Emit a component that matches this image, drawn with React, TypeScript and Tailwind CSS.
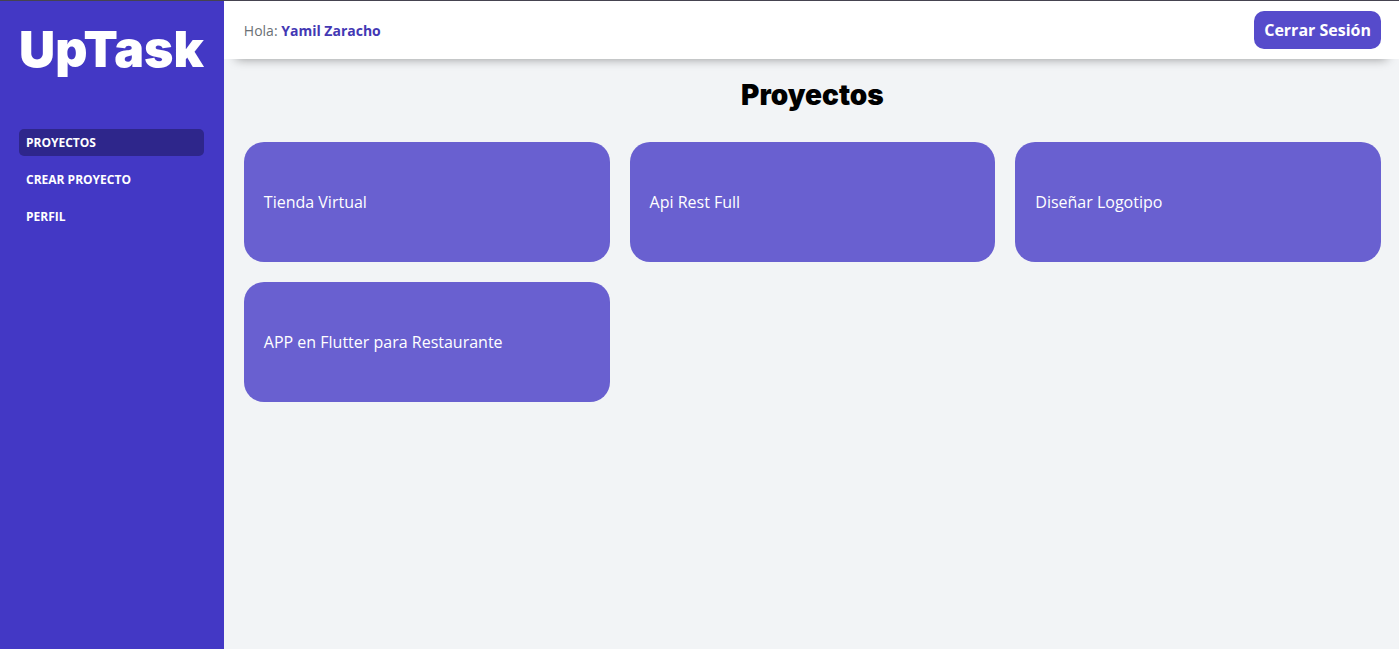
const links = [
  { label: "PROYECTOS", active: true },
  { label: "CREAR PROYECTO", active: false },
  { label: "PERFIL", active: false },
];

const projects = [
  "Tienda Virtual",
  "Api Rest Full",
  "Diseñar Logotipo",
  "APP en Flutter para Restaurante",
];

function Sidebar() {
  return (
    <aside className="w-[16%] shrink-0 bg-[#4338c5] pl-[19px] pr-5 pt-3 text-white">
      <h2 className="text-center font-['Inter',sans-serif] text-[50px] leading-[72px] font-black">
        UpTask
      </h2>
      <nav className="mt-11 flex flex-col gap-[10px]">
        {links.map(({ label, active }) => (
          <a
            key={label}
            href="#"
            aria-current={active ? "page" : undefined}
            className={`rounded-[5px] px-[7px] text-xs leading-[27px] font-bold ${
              active ? "bg-[#2e268b]" : "hover:bg-[#2e268b]"
            }`}
          >
            {label}
          </a>
        ))}
      </nav>
    </aside>
  );
}

function TopBar() {
  return (
    <header className="flex items-center justify-between bg-white py-[10px] pl-5 pr-[18px] shadow-[0_12px_10px_-12px_rgba(0,0,0,0.4)]">
      <p className="text-sm leading-[21px] text-[#6b7075]">
        Hola: <span className="font-bold text-[#4338b4]">Yamil Zaracho</span>
      </p>
      <button
        type="button"
        className="cursor-pointer rounded-[10px] bg-[#564bcb] px-[10px] text-base leading-[38px] font-bold text-white"
      >
        Cerrar Sesión
      </button>
    </header>
  );
}

export default function App() {
  return (
    <div className="flex min-h-screen border-t border-[#454350] bg-[#f2f4f6] font-['Open_Sans',sans-serif]">
      <Sidebar />
      <div className="min-w-0 flex-1">
        <TopBar />
        <main className="pb-5 pl-5 pr-[18px] pt-4">
          <h1 className="text-center font-['Inter',sans-serif] text-[28px] leading-[40px] font-black text-black">
            Proyectos
          </h1>
          <ul className="mt-[27px] grid grid-cols-3 gap-5">
            {projects.map((name) => (
              <li key={name}>
                <a
                  href="#"
                  className="flex h-[120px] items-center rounded-[20px] bg-[#6960d0] px-5 text-base text-white"
                >
                  {name}
                </a>
              </li>
            ))}
          </ul>
        </main>
      </div>
    </div>
  );
}
